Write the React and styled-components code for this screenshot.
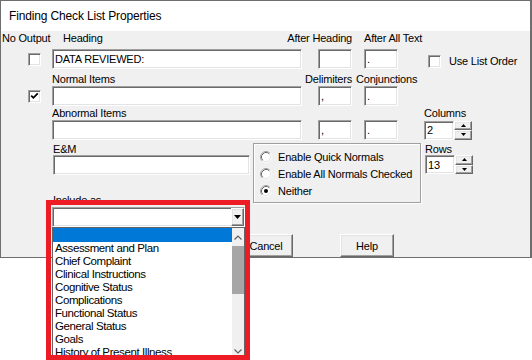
import React from "react";
import styled, { createGlobalStyle } from "styled-components";

const Global = createGlobalStyle`
  html, body { margin: 0; padding: 0; background: #fff; }
  * { box-sizing: border-box; }
`;

const Page = styled.div`
  position: relative;
  width: 532px;
  height: 360px;
  background: #fff;
  overflow: hidden;
  font-family: "Liberation Sans", Arial, sans-serif;
  color: #000;
`;

const Window = styled.div`
  width: 532px;
  height: 258px;
  border: 1px solid #6e6e6e;
  border-right-width: 2px;
  background: #f0f0f0;
  display: flex;
  flex-direction: column;
`;

const TitleBar = styled.div`
  flex: none;
  height: 30px;
  background: #fff;
  padding-left: 8px;
  font-size: 12px;
  line-height: 30px;
  letter-spacing: -0.15px;
`;

const Body = styled.div`
  flex: 1;
  display: flex;
  flex-direction: column;
  font-size: 11px;
  letter-spacing: -0.2px;
`;

const TopGrid = styled.div`
  display: grid;
  grid-template-columns: 51px 250px 16px 34px 12px 34px 25px 1fr;
  grid-template-rows: 18px 20px 17px 20px 14px 20px;
`;

const Cell = styled.div`
  grid-column: ${(p) => p.$col};
  grid-row: ${(p) => p.$row};
  display: flex;
  align-items: ${(p) => p.$valign || "stretch"};
  justify-content: ${(p) => p.$align || "flex-start"};
  padding-left: ${(p) => p.$pad || 0}px;
  min-width: 0;
`;

const Label = styled.span`
  display: block;
  line-height: ${(p) => p.$lh || 14}px;
  margin-top: ${(p) => p.$mt || 0}px;
  white-space: nowrap;
`;

const TextField = styled.input`
  display: block;
  width: ${(p) => (p.$w ? `${p.$w}px` : "100%")};
  height: ${(p) => p.$h || 20}px;
  margin: 0;
  padding: 0 2px;
  border: 1px solid;
  border-color: #a0a0a0 #fff #fff #a0a0a0;
  box-shadow: inset 1px 1px 0 #696969, inset -1px -1px 0 #e3e3e3;
  background: #fff;
  font: inherit;
  letter-spacing: inherit;
  color: #000;
  outline: none;
  border-radius: 0;
`;

const CheckBox = styled.span`
  display: inline-flex;
  flex: none;
  align-items: center;
  justify-content: center;
  width: 13px;
  height: 13px;
  background: #fff;
  border: 1px solid;
  border-color: #a0a0a0 #fff #fff #a0a0a0;
  box-shadow: inset 1px 1px 0 #696969, inset -1px -1px 0 #e3e3e3;
`;

const CheckLabel = styled.div`
  display: flex;
  align-items: center;
  gap: 8px;
  height: 14px;
  margin-top: ${(p) => p.$mt || 0}px;
`;

const Spin = styled.div`
  display: flex;
  height: 19px;
`;

const SpinButtons = styled.div`
  display: flex;
  flex-direction: column;
  width: 18px;
`;

const RaisedBtn = styled.div`
  flex: 1;
  display: flex;
  align-items: center;
  justify-content: center;
  background: #f0f0f0;
  border: 1px solid;
  border-color: #fff #696969 #696969 #fff;
  box-shadow: inset -1px -1px 0 #a0a0a0, inset 1px 1px 0 #e3e3e3;
`;

const Lower = styled.div`
  display: flex;
  align-items: flex-start;
  padding-left: 52px;
`;

const LeftCol = styled.div`
  width: 197px;
  display: flex;
  flex-direction: column;
`;

const GroupBox = styled.div`
  width: 168px;
  height: 60px;
  margin: 3px 0 0 3px;
  border: 1px solid #a0a0a0;
  box-shadow: inset 1px 1px 0 #fff, 1px 1px 0 #fff;
  padding: 4px 0 0 6px;
  display: flex;
  flex-direction: column;
`;

const RadioRow = styled.div`
  display: flex;
  align-items: center;
  gap: 6px;
  height: 17px;
`;

const RightCol = styled.div`
  margin: 3px 0 0 4px;
  display: flex;
  flex-direction: column;
`;

const ButtonRow = styled.div`
  display: flex;
  gap: 47px;
  margin-top: 7px;
  padding-left: 137px;
`;

const Button = styled.button`
  width: 54px;
  height: 23px;
  margin: 0;
  padding: 0;
  background: #f0f0f0;
  font: inherit;
  letter-spacing: inherit;
  color: #000;
  border: 1px solid;
  border-color: #fff #696969 #696969 #fff;
  box-shadow: inset -1px -1px 0 #a0a0a0, inset 1px 1px 0 #e3e3e3;
  border-radius: 0;
`;

const ComboWrap = styled.div`
  position: relative;
  width: 193px;
  margin: 1px 0 0 -1px;
`;

const ComboBox = styled.div`
  height: 20px;
  display: flex;
  justify-content: flex-end;
  background: #fff;
  border: 1px solid;
  border-color: #a0a0a0 #fff #fff #a0a0a0;
  box-shadow: inset 1px 1px 0 #696969, inset -1px -1px 0 #e3e3e3;
`;

const DropBtn = styled(RaisedBtn)`
  flex: none;
  width: 13px;
`;

const DropList = styled.div`
  position: absolute;
  top: 100%;
  left: 0;
  width: 193px;
  height: 134px;
  display: flex;
  background: #fff;
  border: 1px solid #646464;
  z-index: 2;
`;

const Items = styled.div`
  flex: 1;
  display: flex;
  flex-direction: column;
  overflow: hidden;
  font-size: 11.5px;
  letter-spacing: -0.4px;
`;

const Item = styled.div`
  flex: none;
  height: ${(p) => (p.$selected ? 14 : 13)}px;
  line-height: 13px;
  padding-left: 2px;
  white-space: nowrap;
  background: ${(p) => (p.$selected ? "#0078d7" : "transparent")};
  color: ${(p) => (p.$selected ? "#fff" : "#000")};
`;

const ScrollBar = styled.div`
  width: 12px;
  display: flex;
  flex-direction: column;
  background: #f0f0f0;
`;

const ScrollArrow = styled.div`
  flex: none;
  height: 18px;
  display: flex;
  align-items: center;
  justify-content: center;
`;

const Thumb = styled.div`
  flex: none;
  height: 48px;
  background: #a6a6a6;
`;

const Track = styled.div`
  flex: 1;
`;

const Highlight = styled.div`
  position: absolute;
  top: -7px;
  left: -6px;
  width: 204px;
  height: 160px;
  border: 5px solid #ed1c24;
  z-index: 3;
  pointer-events: none;
`;

const Check = ({ checked }) => (
  <CheckBox>
    {checked && (
      <svg width="9" height="8" viewBox="0 0 9 8">
        <path d="M1.2 3.6 L3.4 5.8 L7.8 1.4" fill="none" stroke="#000" strokeWidth="1.8" />
      </svg>
    )}
  </CheckBox>
);

const Radio = ({ checked }) => (
  <svg width="12" height="12" viewBox="0 0 12 12">
    <circle cx="6" cy="6" r="5.5" fill="#fff" stroke="#f8f8f8" />
    <path d="M9.89 2.11 A5.5 5.5 0 0 0 2.11 9.89" fill="none" stroke="#a0a0a0" />
    <path d="M9.18 2.82 A4.5 4.5 0 0 0 2.82 9.18" fill="none" stroke="#696969" />
    <path d="M2.82 9.18 A4.5 4.5 0 0 0 9.18 2.82" fill="none" stroke="#e3e3e3" />
    {checked && <circle cx="6" cy="6" r="2" fill="#000" />}
  </svg>
);

const Tri = ({ up, w = 5, h = 3 }) => (
  <svg width={w} height={h} viewBox={`0 0 ${w} ${h}`}>
    <path d={up ? `M0 ${h} H${w} L${w / 2} 0 Z` : `M0 0 H${w} L${w / 2} ${h} Z`} fill="#000" />
  </svg>
);

const Chevron = ({ up }) => (
  <svg width="8" height="5" viewBox="0 0 8 5">
    <path d={up ? "M0.5 4.5 L4 1 L7.5 4.5" : "M0.5 0.5 L4 4 L7.5 0.5"} fill="none" stroke="#606060" strokeWidth="1.2" />
  </svg>
);

const Spinner = ({ value }) => (
  <Spin>
    <TextField $w={30} $h={19} readOnly value={value} />
    <SpinButtons>
      <RaisedBtn><Tri up w={5} h={3} /></RaisedBtn>
      <RaisedBtn><Tri w={5} h={3} /></RaisedBtn>
    </SpinButtons>
  </Spin>
);

const items = [
  "Assessment and Plan",
  "Chief Complaint",
  "Clinical Instructions",
  "Cognitive Status",
  "Complications",
  "Functional Status",
  "General Status",
  "Goals",
  "History of Present Illness",
];

export default function App() {
  return (
    <Page>
      <Global />
      <Window>
        <TitleBar>Finding Check List Properties</TitleBar>
        <Body>
          <TopGrid>
            <Cell $col="1" $row="1" $pad={1} $valign="flex-start"><Label>No Output</Label></Cell>
            <Cell $col="2" $row="1" $pad={11} $valign="flex-start"><Label>Heading</Label></Cell>
            <Cell $col="2 / 5" $row="1" $align="flex-end" $valign="flex-start"><Label>After Heading</Label></Cell>
            <Cell $col="6 / 9" $row="1" $valign="flex-start"><Label>After All Text</Label></Cell>

            <Cell $col="1" $row="2" $pad={27} $valign="center"><Check /></Cell>
            <Cell $col="2" $row="2"><TextField readOnly value="DATA REVIEWED:" /></Cell>
            <Cell $col="4" $row="2"><TextField readOnly value="" /></Cell>
            <Cell $col="6" $row="2"><TextField readOnly value="." /></Cell>
            <Cell $col="8" $row="2" $pad={5} $valign="flex-start">
              <CheckLabel $mt={5}><Check /><span>Use List Order</span></CheckLabel>
            </Cell>

            <Cell $col="2" $row="3" $valign="flex-end"><Label>Normal Items</Label></Cell>
            <Cell $col="3 / 5" $row="3" $align="flex-end" $valign="flex-end"><Label>Delimiters</Label></Cell>
            <Cell $col="5 / 8" $row="3" $pad={4} $valign="flex-end"><Label>Conjunctions</Label></Cell>

            <Cell $col="1" $row="4" $pad={27} $valign="center"><Check checked /></Cell>
            <Cell $col="2" $row="4"><TextField readOnly value="" /></Cell>
            <Cell $col="4" $row="4"><TextField readOnly value="," /></Cell>
            <Cell $col="6" $row="4"><TextField readOnly value="." /></Cell>

            <Cell $col="2" $row="5" $valign="flex-end"><Label>Abnormal Items</Label></Cell>
            <Cell $col="8" $row="5" $pad={1} $valign="flex-end"><Label>Columns</Label></Cell>

            <Cell $col="2" $row="6"><TextField readOnly value="" /></Cell>
            <Cell $col="4" $row="6"><TextField readOnly value="," /></Cell>
            <Cell $col="6" $row="6"><TextField readOnly value="." /></Cell>
            <Cell $col="8" $row="6" $pad={1} $valign="center"><Spinner value="2" /></Cell>
          </TopGrid>

          <Lower>
            <LeftCol>
              <Label $lh={12} $mt={3}>E&amp;M</Label>
              <TextField readOnly value="" />
              <Label $lh={12} $mt={19}>Include as</Label>
              <ComboWrap>
                <ComboBox>
                  <DropBtn><Tri w={7} h={4} /></DropBtn>
                </ComboBox>
                <DropList>
                  <Items>
                    <Item $selected>&nbsp;</Item>
                    {items.map((t) => (
                      <Item key={t}>{t}</Item>
                    ))}
                  </Items>
                  <ScrollBar>
                    <ScrollArrow><Chevron up /></ScrollArrow>
                    <Thumb />
                    <Track />
                    <ScrollArrow><Chevron /></ScrollArrow>
                  </ScrollBar>
                </DropList>
                <Highlight />
              </ComboWrap>
            </LeftCol>

            <GroupBox>
              <RadioRow><Radio /><span>Enable Quick Normals</span></RadioRow>
              <RadioRow><Radio /><span>Enable All Normals Checked</span></RadioRow>
              <RadioRow><Radio checked /><span>Neither</span></RadioRow>
            </GroupBox>

            <RightCol>
              <Label $lh={12}>Rows</Label>
              <Spinner value="13" />
            </RightCol>
          </Lower>

          <ButtonRow>
            <Button>OK</Button>
            <Button>Cancel</Button>
            <Button>Help</Button>
          </ButtonRow>
        </Body>
      </Window>
    </Page>
  );
}
